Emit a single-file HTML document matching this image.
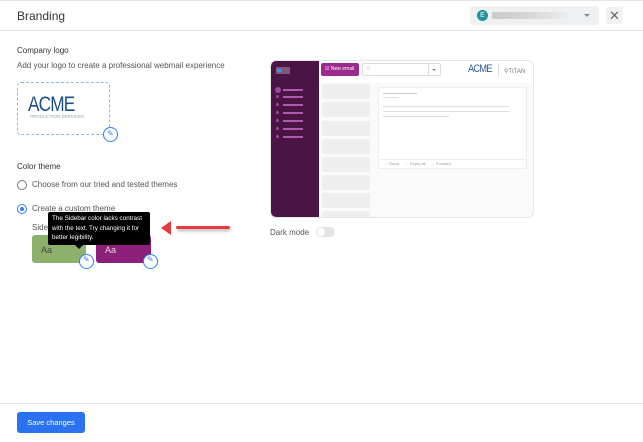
<!DOCTYPE html>
<html><head><style>
*{box-sizing:border-box;margin:0;padding:0}
body{width:643px;height:442px;background:#fff;font-family:"Liberation Sans",sans-serif;color:#333;position:relative;overflow:hidden}
.a{position:absolute}
.t{font-size:8px;color:#555}
.ln{position:absolute;height:2px;background:#e2e2e2}
.sl{position:absolute;height:2px;background:#b05ab0;width:20px;left:283px}
.sd{position:absolute;width:4px;height:4px;border-radius:50%;background:#9a4a96;left:276px}
.card{position:absolute;left:322px;width:48px;height:15px;background:#eeeeee;border-radius:2px}
.pen{position:absolute;width:15px;height:15px;border-radius:50%;background:#fff;border:1px solid #2f7ef5}
</style></head><body>
<div class="a" style="left:0;top:0;width:643px;height:1px;background:#e5e5e5"></div>
<div class="a" style="left:17px;top:9px;font-size:12px;color:#333">Branding</div>
<div class="a" style="left:470px;top:6px;width:129px;height:19px;background:#eff0f2;border-radius:3px"></div>
<div class="a" style="left:477px;top:10px;width:11px;height:11px;border-radius:50%;background:#23909a;color:#fff;font-size:7px;text-align:center;line-height:11px">E</div>
<div class="a" style="left:492px;top:12px;width:80px;height:7px;background:linear-gradient(90deg,#c8c8c8,#d8d8d8,#eff0f2);border-radius:2px"></div>
<div class="a" style="left:584px;top:14px;border:3px solid transparent;border-top:3px solid #888;width:0;height:0"></div>
<div class="a" style="left:606px;top:7px;width:17px;height:17px;background:#f1f1f3;border-radius:2px;font-size:13px;color:#666;text-align:center;line-height:17px">✕</div>
<div class="a" style="left:0;top:30px;width:643px;height:1px;background:#e5e5e5"></div>

<div class="a" style="left:17px;top:46px;font-size:8px;color:#333">Company logo</div>
<div class="a t" style="left:17px;top:61px">Add your logo to create a professional webmail experience</div>
<div class="a" style="left:17px;top:82px;width:93px;height:53px;border:1px dashed #8fb6f0;border-radius:4px"></div>
<div class="a" style="left:28px;top:93px;font-size:21px;color:#1e4e86;letter-spacing:-1px;transform:scaleX(.82);transform-origin:left top">ACME</div>
<div class="a" style="left:30px;top:114px;font-size:4.5px;color:#8aa">PRODUCTION SERVICES</div>
<div class="pen" style="left:103px;top:127px"></div>
<div class="a" style="left:107px;top:129px;font-size:8px;color:#2f7ef5">✎</div>

<div class="a" style="left:17px;top:162px;font-size:8px;color:#333">Color theme</div>
<div class="a" style="left:17px;top:180px;width:10px;height:10px;border:1px solid #777;border-radius:50%"></div>
<div class="a t" style="left:32px;top:180px">Choose from our tried and tested themes</div>
<div class="a" style="left:17px;top:204px;width:10px;height:10px;border:1px solid #2f7ef5;border-radius:50%"></div>
<div class="a" style="left:20px;top:207px;width:4px;height:4px;background:#2f7ef5;border-radius:50%"></div>
<div class="a t" style="left:32px;top:204px">Create a custom theme</div>
<div class="a t" style="left:32px;top:223px">Side</div>
<div class="a" style="left:32px;top:235px;width:54px;height:28px;background:#8db06b;border-radius:3px"></div>
<div class="a" style="left:41px;top:245px;font-size:9px;color:#444">Aa</div>
<div class="a" style="left:96px;top:235px;width:55px;height:28px;background:#8c1f7a;border-radius:3px"></div>
<div class="a" style="left:105px;top:245px;font-size:9px;color:#ddd">Aa</div>
<div class="pen" style="left:79px;top:254px"></div>
<div class="a" style="left:83px;top:255px;font-size:8px;color:#2f7ef5">✎</div>
<div class="pen" style="left:143px;top:254px"></div>
<div class="a" style="left:147px;top:255px;font-size:8px;color:#2f7ef5">✎</div>
<div class="a" style="left:48px;top:212px;width:102px;height:33px;background:#000;border-radius:2px;color:#fff;font-size:6.3px;line-height:9.5px;padding:2px 4px">The Sidebar color lacks contrast with the text. Try changing it for better legibility.</div>
<div class="a" style="left:75px;top:245px;border:4px solid transparent;border-top:4px solid #000;width:0;height:0"></div>
<div class="a" style="left:176px;top:226px;width:54px;height:3px;background:#e9393f;border-radius:2px;box-shadow:1px 2px 3px rgba(0,0,0,.3)"></div>
<div class="a" style="left:161px;top:221px;border:7px solid transparent;border-right:10px solid #e9393f;border-left:0;width:0;height:0"></div>

<div class="a" style="left:270px;top:60px;width:264px;height:158px;border:1px solid #e6e6e6;border-radius:6px;overflow:hidden;background:#fafafa">
 <div class="a" style="left:0;top:0;width:48px;height:158px;background:#4a1545"></div>
 <div class="a" style="left:48px;top:0;width:216px;height:22px;background:#fff"></div>
</div>
<div class="a" style="left:276px;top:67px;width:14px;height:7px;background:#7a5a78"></div>
<div class="a" style="left:277px;top:69px;width:5px;height:3px;background:#3a8ef0"></div>
<div class="sd" style="left:275px;top:87px;width:6px;height:6px"></div>
<div class="sl" style="top:89px"></div><div class="sl" style="top:96px"></div><div class="sl" style="top:104px"></div><div class="sl" style="top:112px"></div><div class="sl" style="top:120px"></div><div class="sl" style="top:128px"></div><div class="sl" style="top:136px"></div>
<div class="sd" style="top:95px;width:3px;height:3px"></div><div class="sd" style="top:103px;width:3px;height:3px"></div><div class="sd" style="top:111px;width:3px;height:3px"></div><div class="sd" style="top:119px;width:3px;height:3px"></div><div class="sd" style="top:127px;width:3px;height:3px"></div><div class="sd" style="top:135px;width:3px;height:3px"></div>
<div class="a" style="left:321px;top:63px;width:38px;height:13px;background:#9b2a8f;border-radius:2px;color:#fff;font-size:5px;line-height:13px;padding-left:4px">☑ New email</div>
<div class="a" style="left:362px;top:63px;width:79px;height:13px;border:1px solid #ddd;border-radius:2px;background:#fff"></div>
<div class="a" style="left:366px;top:65px;font-size:7px;color:#999">○</div>
<div class="a" style="left:428px;top:64px;width:1px;height:11px;background:#ddd"></div>
<div class="a" style="left:432px;top:69px;border:2px solid transparent;border-top:2px solid #888;width:0;height:0"></div>
<div class="a" style="left:468px;top:63px;font-size:11px;color:#2f5f96;letter-spacing:-1px;transform:scaleX(.85);transform-origin:left top">ACME</div>
<div class="a" style="left:498px;top:63px;width:1px;height:14px;background:#ddd"></div>
<div class="a" style="left:504px;top:68px;font-size:6px;color:#777">⚲TITAN</div>
<div class="card" style="top:84px"></div><div class="card" style="top:102px"></div><div class="card" style="top:121px"></div><div class="card" style="top:139px"></div><div class="card" style="top:157px"></div><div class="card" style="top:175px"></div><div class="card" style="top:193px"></div><div class="card" style="top:211px;height:6px"></div>
<div class="a" style="left:378px;top:87px;width:149px;height:82px;background:#fff;border:1px solid #eee;border-radius:2px"></div>
<div class="ln" style="left:383px;top:93px;width:34px;height:1px;background:#ccc"></div>
<div class="ln" style="left:383px;top:97px;width:16px;height:1px"></div>
<div class="ln" style="left:383px;top:106px;width:126px;height:1px;background:#ddd"></div>
<div class="ln" style="left:383px;top:111px;width:126px;height:1px;background:#ddd"></div>
<div class="ln" style="left:383px;top:116px;width:66px;height:1px;background:#ddd"></div>
<div class="a" style="left:378px;top:159px;width:149px;height:1px;background:#eee"></div>
<div class="a" style="left:384px;top:161px;font-size:4px;color:#999">← Reply &nbsp;&nbsp;&nbsp; ← Reply all &nbsp;&nbsp;&nbsp; → Forward</div>
<div class="a t" style="left:270px;top:228px">Dark mode</div>
<div class="a" style="left:316px;top:227px;width:19px;height:10px;border-radius:5px;background:#e4e4e4"></div>
<div class="a" style="left:317px;top:228px;width:8px;height:8px;border-radius:50%;background:#fff"></div>

<div class="a" style="left:0;top:403px;width:643px;height:1px;background:#e8e8e8"></div>
<div class="a" style="left:17px;top:412px;width:68px;height:21px;background:#2a72f0;border-radius:3px;color:#fff;font-size:7.5px;text-align:center;line-height:21px">Save changes</div>
</body></html>
